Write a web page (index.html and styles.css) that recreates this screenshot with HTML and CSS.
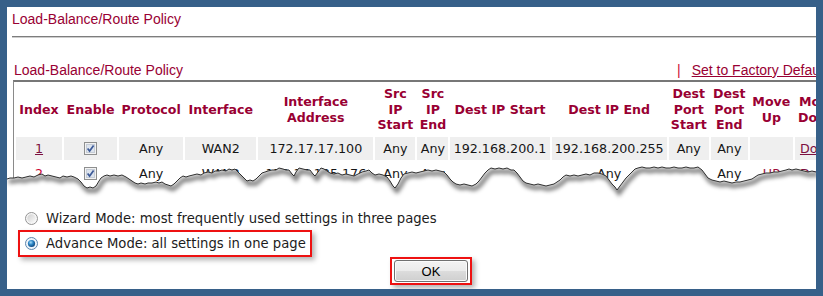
FILE: index.html
```html
<!DOCTYPE html>
<html>
<head>
<meta charset="utf-8">
<title>Load-Balance/Route Policy</title>
<link rel="stylesheet" href="styles.css">
</head>
<body>
<div class="panel">
  <div class="title">Load-Balance/Route Policy</div>
  <div class="rule"></div>
  <div class="sub">
    <span>Load-Balance/Route Policy</span>
    <span class="right"><span class="bar">|</span><a class="link" href="#">Set to Factory Default</a></span>
  </div>
  <div class="tablewrap">
    <table class="grid">
      <colgroup>
        <col><col><col><col><col><col><col><col><col><col><col><col><col>
      </colgroup>
      <thead>
        <tr>
          <th>Index</th><th>Enable</th><th>Protocol</th><th>Interface</th><th>Interface Address</th>
          <th>Src IP Start</th><th>Src IP End</th><th>Dest IP Start</th><th>Dest IP End</th>
          <th>Dest Port Start</th><th>Dest Port End</th><th>Move Up</th><th>Move Down</th>
        </tr>
      </thead>
      <tbody>
        <tr class="shade">
          <td><a class="idx" href="#">1</a></td>
          <td><svg class="cb" width="13" height="13" viewBox="0 0 13 13"><rect x="0.5" y="0.5" width="12" height="12" fill="#f2f2f2" stroke="#8e8f8f"/><rect x="2.5" y="2.5" width="8" height="8" fill="#dde4ee" stroke="#c5ccd6"/><path d="M3.6 6.4 L5.6 9 L9.6 3.4" fill="none" stroke="#3d5a98" stroke-width="1.7"/></svg></td>
          <td>Any</td><td>WAN2</td><td>172.17.17.100</td><td>Any</td><td>Any</td>
          <td>192.168.200.1</td><td>192.168.200.255</td><td>Any</td><td>Any</td><td></td>
          <td><a class="idx" href="#">Down</a></td>
        </tr>
        <tr>
          <td><a class="idx two" href="#">2</a></td>
          <td><svg class="cb" width="13" height="13" viewBox="0 0 13 13"><rect x="0.5" y="0.5" width="12" height="12" fill="#f2f2f2" stroke="#8e8f8f"/><rect x="2.5" y="2.5" width="8" height="8" fill="#dde4ee" stroke="#c5ccd6"/><path d="M3.6 6.4 L5.6 9 L9.6 3.4" fill="none" stroke="#3d5a98" stroke-width="1.7"/></svg></td>
          <td>Any</td><td>WAN2</td><td>172.16.185.176</td><td>Any</td><td>Any</td>
          <td>Any</td><td>Any</td><td>Any</td><td>Any</td>
          <td><a class="up" href="#">UP</a></td>
          <td><a class="idx" href="#">Down</a></td>
        </tr>
      </tbody>
    </table>
    <svg class="tear" width="809" height="125" viewBox="7 80 809 125">
      <defs>
        <clipPath id="below">
          <path d="M7 179 L10 178 L14 178 L18 177 L22 178 L26 177 L30 176 L34 177 L38 175 L42 174 L45 176 L48 175 L52 176 L56 177 L60 178 L63 176 L67 177 L71 176 L74 177 L78 179 L81 182 L84 186 L87 188 L90 187 L93 188 L96 186 L99 181 L101 178 L104 176 L107 175 L110 176 L114 175 L118 176 L122 175 L126 177 L129 179 L132 181 L135 183 L138 184 L141 183 L145 184 L148 183 L152 183 L156 182 L159 183 L162 182 L165 184 L168 185 L171 186 L174 184 L177 181 L180 178 L183 176 L186 177 L189 176 L193 175 L197 174 L201 175 L204 173 L208 172 L212 173 L215 171 L219 171 L222 170 L226 171 L229 169 L232 170 L235 169 L238 172 L241 175 L244 178 L247 181 L250 180 L253 181 L256 179 L259 176 L262 173 L265 172 L268 171 L272 170 L276 170 L279 168 L283 169 L286 170 L289 170 L292 174 L294 176 L296 172 L299 168 L303 169 L307 170 L310 170 L313 174 L315 176 L318 172 L321 168 L324 169 L327 171 L330 173 L334 174 L338 173 L342 175 L346 174 L350 175 L354 176 L358 174 L362 172 L366 171 L369 170 L372 173 L375 175 L379 174 L383 175 L387 177 L390 181 L393 186 L395 188 L398 184 L401 178 L404 174 L408 173 L412 172 L416 173 L420 172 L424 171 L428 170 L432 171 L436 170 L440 171 L444 172 L447 175 L450 179 L453 182 L456 184 L460 185 L464 184 L468 185 L472 186 L476 184 L479 181 L482 177 L485 173 L488 170 L491 168 L495 169 L499 168 L503 169 L507 168 L511 170 L514 170 L517 173 L520 177 L523 181 L526 183 L530 184 L534 185 L538 184 L542 185 L546 186 L550 185 L554 184 L557 182 L560 180 L563 177 L566 175 L570 176 L574 175 L578 176 L582 175 L586 174 L590 175 L594 173 L598 173 L602 174 L606 176 L609 180 L612 184 L615 187 L617 190 L620 186 L623 182 L626 178 L629 175 L632 172 L635 169 L638 168 L642 167 L646 168 L650 168 L654 167 L658 168 L662 167 L666 168 L670 168 L674 167 L678 168 L682 168 L686 167 L690 168 L694 168 L698 167 L702 170 L705 174 L708 178 L712 180 L716 181 L720 182 L724 181 L728 182 L732 183 L736 182 L740 182 L744 181 L748 180 L752 179 L755 177 L758 175 L762 174 L766 173 L770 173 L774 172 L778 172 L782 171 L786 170 L789 169 L792 170 L796 169 L800 170 L804 171 L808 172 L812 171 L816 172 L816 205 L7 205 Z"/>
        </clipPath>
        <filter id="soft" x="-5%" y="-50%" width="110%" height="200%">
          <feGaussianBlur stdDeviation="2.2"/>
        </filter>
      </defs>
      <path class="paper" d="M7 179 L10 178 L14 178 L18 177 L22 178 L26 177 L30 176 L34 177 L38 175 L42 174 L45 176 L48 175 L52 176 L56 177 L60 178 L63 176 L67 177 L71 176 L74 177 L78 179 L81 182 L84 186 L87 188 L90 187 L93 188 L96 186 L99 181 L101 178 L104 176 L107 175 L110 176 L114 175 L118 176 L122 175 L126 177 L129 179 L132 181 L135 183 L138 184 L141 183 L145 184 L148 183 L152 183 L156 182 L159 183 L162 182 L165 184 L168 185 L171 186 L174 184 L177 181 L180 178 L183 176 L186 177 L189 176 L193 175 L197 174 L201 175 L204 173 L208 172 L212 173 L215 171 L219 171 L222 170 L226 171 L229 169 L232 170 L235 169 L238 172 L241 175 L244 178 L247 181 L250 180 L253 181 L256 179 L259 176 L262 173 L265 172 L268 171 L272 170 L276 170 L279 168 L283 169 L286 170 L289 170 L292 174 L294 176 L296 172 L299 168 L303 169 L307 170 L310 170 L313 174 L315 176 L318 172 L321 168 L324 169 L327 171 L330 173 L334 174 L338 173 L342 175 L346 174 L350 175 L354 176 L358 174 L362 172 L366 171 L369 170 L372 173 L375 175 L379 174 L383 175 L387 177 L390 181 L393 186 L395 188 L398 184 L401 178 L404 174 L408 173 L412 172 L416 173 L420 172 L424 171 L428 170 L432 171 L436 170 L440 171 L444 172 L447 175 L450 179 L453 182 L456 184 L460 185 L464 184 L468 185 L472 186 L476 184 L479 181 L482 177 L485 173 L488 170 L491 168 L495 169 L499 168 L503 169 L507 168 L511 170 L514 170 L517 173 L520 177 L523 181 L526 183 L530 184 L534 185 L538 184 L542 185 L546 186 L550 185 L554 184 L557 182 L560 180 L563 177 L566 175 L570 176 L574 175 L578 176 L582 175 L586 174 L590 175 L594 173 L598 173 L602 174 L606 176 L609 180 L612 184 L615 187 L617 190 L620 186 L623 182 L626 178 L629 175 L632 172 L635 169 L638 168 L642 167 L646 168 L650 168 L654 167 L658 168 L662 167 L666 168 L670 168 L674 167 L678 168 L682 168 L686 167 L690 168 L694 168 L698 167 L702 170 L705 174 L708 178 L712 180 L716 181 L720 182 L724 181 L728 182 L732 183 L736 182 L740 182 L744 181 L748 180 L752 179 L755 177 L758 175 L762 174 L766 173 L770 173 L774 172 L778 172 L782 171 L786 170 L789 169 L792 170 L796 169 L800 170 L804 171 L808 172 L812 171 L816 172 L816 205 L7 205 Z"/>
      <g clip-path="url(#below)">
        <path class="shadow" filter="url(#soft)" transform="translate(2 3)" d="M7 179 L10 178 L14 178 L18 177 L22 178 L26 177 L30 176 L34 177 L38 175 L42 174 L45 176 L48 175 L52 176 L56 177 L60 178 L63 176 L67 177 L71 176 L74 177 L78 179 L81 182 L84 186 L87 188 L90 187 L93 188 L96 186 L99 181 L101 178 L104 176 L107 175 L110 176 L114 175 L118 176 L122 175 L126 177 L129 179 L132 181 L135 183 L138 184 L141 183 L145 184 L148 183 L152 183 L156 182 L159 183 L162 182 L165 184 L168 185 L171 186 L174 184 L177 181 L180 178 L183 176 L186 177 L189 176 L193 175 L197 174 L201 175 L204 173 L208 172 L212 173 L215 171 L219 171 L222 170 L226 171 L229 169 L232 170 L235 169 L238 172 L241 175 L244 178 L247 181 L250 180 L253 181 L256 179 L259 176 L262 173 L265 172 L268 171 L272 170 L276 170 L279 168 L283 169 L286 170 L289 170 L292 174 L294 176 L296 172 L299 168 L303 169 L307 170 L310 170 L313 174 L315 176 L318 172 L321 168 L324 169 L327 171 L330 173 L334 174 L338 173 L342 175 L346 174 L350 175 L354 176 L358 174 L362 172 L366 171 L369 170 L372 173 L375 175 L379 174 L383 175 L387 177 L390 181 L393 186 L395 188 L398 184 L401 178 L404 174 L408 173 L412 172 L416 173 L420 172 L424 171 L428 170 L432 171 L436 170 L440 171 L444 172 L447 175 L450 179 L453 182 L456 184 L460 185 L464 184 L468 185 L472 186 L476 184 L479 181 L482 177 L485 173 L488 170 L491 168 L495 169 L499 168 L503 169 L507 168 L511 170 L514 170 L517 173 L520 177 L523 181 L526 183 L530 184 L534 185 L538 184 L542 185 L546 186 L550 185 L554 184 L557 182 L560 180 L563 177 L566 175 L570 176 L574 175 L578 176 L582 175 L586 174 L590 175 L594 173 L598 173 L602 174 L606 176 L609 180 L612 184 L615 187 L617 190 L620 186 L623 182 L626 178 L629 175 L632 172 L635 169 L638 168 L642 167 L646 168 L650 168 L654 167 L658 168 L662 167 L666 168 L670 168 L674 167 L678 168 L682 168 L686 167 L690 168 L694 168 L698 167 L702 170 L705 174 L708 178 L712 180 L716 181 L720 182 L724 181 L728 182 L732 183 L736 182 L740 182 L744 181 L748 180 L752 179 L755 177 L758 175 L762 174 L766 173 L770 173 L774 172 L778 172 L782 171 L786 170 L789 169 L792 170 L796 169 L800 170 L804 171 L808 172 L812 171 L816 172"/>
      </g>
      <path class="edge" d="M7 179 L10 178 L14 178 L18 177 L22 178 L26 177 L30 176 L34 177 L38 175 L42 174 L45 176 L48 175 L52 176 L56 177 L60 178 L63 176 L67 177 L71 176 L74 177 L78 179 L81 182 L84 186 L87 188 L90 187 L93 188 L96 186 L99 181 L101 178 L104 176 L107 175 L110 176 L114 175 L118 176 L122 175 L126 177 L129 179 L132 181 L135 183 L138 184 L141 183 L145 184 L148 183 L152 183 L156 182 L159 183 L162 182 L165 184 L168 185 L171 186 L174 184 L177 181 L180 178 L183 176 L186 177 L189 176 L193 175 L197 174 L201 175 L204 173 L208 172 L212 173 L215 171 L219 171 L222 170 L226 171 L229 169 L232 170 L235 169 L238 172 L241 175 L244 178 L247 181 L250 180 L253 181 L256 179 L259 176 L262 173 L265 172 L268 171 L272 170 L276 170 L279 168 L283 169 L286 170 L289 170 L292 174 L294 176 L296 172 L299 168 L303 169 L307 170 L310 170 L313 174 L315 176 L318 172 L321 168 L324 169 L327 171 L330 173 L334 174 L338 173 L342 175 L346 174 L350 175 L354 176 L358 174 L362 172 L366 171 L369 170 L372 173 L375 175 L379 174 L383 175 L387 177 L390 181 L393 186 L395 188 L398 184 L401 178 L404 174 L408 173 L412 172 L416 173 L420 172 L424 171 L428 170 L432 171 L436 170 L440 171 L444 172 L447 175 L450 179 L453 182 L456 184 L460 185 L464 184 L468 185 L472 186 L476 184 L479 181 L482 177 L485 173 L488 170 L491 168 L495 169 L499 168 L503 169 L507 168 L511 170 L514 170 L517 173 L520 177 L523 181 L526 183 L530 184 L534 185 L538 184 L542 185 L546 186 L550 185 L554 184 L557 182 L560 180 L563 177 L566 175 L570 176 L574 175 L578 176 L582 175 L586 174 L590 175 L594 173 L598 173 L602 174 L606 176 L609 180 L612 184 L615 187 L617 190 L620 186 L623 182 L626 178 L629 175 L632 172 L635 169 L638 168 L642 167 L646 168 L650 168 L654 167 L658 168 L662 167 L666 168 L670 168 L674 167 L678 168 L682 168 L686 167 L690 168 L694 168 L698 167 L702 170 L705 174 L708 178 L712 180 L716 181 L720 182 L724 181 L728 182 L732 183 L736 182 L740 182 L744 181 L748 180 L752 179 L755 177 L758 175 L762 174 L766 173 L770 173 L774 172 L778 172 L782 171 L786 170 L789 169 L792 170 L796 169 L800 170 L804 171 L808 172 L812 171 L816 172"/>
    </svg>
  </div>
  <div class="modes">
    <label class="mode">
      <svg class="radio" width="13" height="13" viewBox="0 0 13 13"><defs><linearGradient id="ru" x1="0" y1="0" x2="1" y2="1"><stop offset="0" stop-color="#cfcfcf"/><stop offset="1" stop-color="#fbfbfb"/></linearGradient></defs><circle cx="6.5" cy="6.5" r="6" fill="#f6f6f6" stroke="#939393"/><circle cx="6.5" cy="6.5" r="4.2" fill="url(#ru)"/></svg>
      <span>Wizard Mode: most frequently used settings in three pages</span>
    </label>
    <label class="mode picked">
      <svg class="radio" width="13" height="13" viewBox="0 0 13 13"><defs><radialGradient id="rc" cx="0.4" cy="0.35" r="0.7"><stop offset="0" stop-color="#a8dcf8"/><stop offset="0.45" stop-color="#2d86c6"/><stop offset="1" stop-color="#0b3f74"/></radialGradient></defs><circle cx="6.5" cy="6.5" r="6" fill="#eef4fa" stroke="#5e86ad"/><circle cx="6.5" cy="6.5" r="3.6" fill="url(#rc)"/></svg>
      <span>Advance Mode: all settings in one page</span>
    </label>
  </div>
  <div class="actions">
    <span class="okbox"><button class="ok" type="button">OK</button></span>
  </div>
</div>
</body>
</html>
```

FILE: styles.css
```css
html, body {
  margin: 0;
  padding: 0;
}
body {
  width: 823px;
  height: 296px;
  box-sizing: border-box;
  padding: 7px;
  background: #376089;
  font-family: "DejaVu Sans", Verdana, sans-serif;
  overflow: hidden;
}
.panel {
  width: 809px;
  height: 282px;
  background: #ffffff;
  overflow: hidden;
  position: relative;
}
.title {
  margin: 4px 0 0 5px;
  font-family: "Liberation Sans", Arial, sans-serif;
  font-size: 14px;
  line-height: 16px;
  color: #990033;
  white-space: nowrap;
}
.rule {
  margin: 9px 0 0 5px;
  border-top: 1px solid #7d7d7d;
  border-bottom: 1px solid #cdcdcd;
}
.sub {
  margin: 24px 0 0 7px;
  display: grid;
  grid-template-columns: 663px max-content;
  font-family: "Liberation Sans", Arial, sans-serif;
  font-size: 14px;
  line-height: 16px;
  color: #990033;
  white-space: nowrap;
}
.bar {
  color: #cc1133;
  margin-right: 11px;
}
.link {
  color: #990033;
  text-decoration: underline;
}
.tablewrap {
  margin-top: 2px;
  height: 125px;
  position: relative;
  overflow: hidden;
}
.grid {
  margin-left: 6px;
  width: 830px;
  table-layout: fixed;
  border-collapse: separate;
  border-spacing: 2px;
  border-top: 2px solid #777777;
  border-left: 1px solid #8a8a8a;
  font-size: 12.7px;
  color: #161616;
}
.grid col:nth-child(1) { width: 46px; }
.grid col:nth-child(2) { width: 53px; }
.grid col:nth-child(3) { width: 64px; }
.grid col:nth-child(4) { width: 71px; }
.grid col:nth-child(5) { width: 115px; }
.grid col:nth-child(6) { width: 40px; }
.grid col:nth-child(7) { width: 31px; }
.grid col:nth-child(8) { width: 99px; }
.grid col:nth-child(9) { width: 115px; }
.grid col:nth-child(10) { width: 40px; }
.grid col:nth-child(11) { width: 37px; }
.grid col:nth-child(12) { width: 43px; }
.grid col:nth-child(13) { width: 46px; }
.grid th {
  height: 51px;
  padding: 0;
  font-weight: bold;
  font-size: 12.6px;
  line-height: 15.5px;
  color: #990033;
  text-align: center;
  vertical-align: middle;
  overflow: hidden;
}
.grid td {
  height: 23px;
  padding: 0;
  text-align: center;
  vertical-align: middle;
  white-space: nowrap;
  overflow: hidden;
}
.grid tr.shade td {
  background: #efefef;
}
.cb {
  display: block;
  margin: 0 auto;
}
.idx {
  color: #7c1040;
  text-decoration: underline;
}
.idx.two {
  color: #cc0033;
}
.up {
  color: #a0103c;
  text-decoration: none;
}
.tear {
  position: absolute;
  left: 0;
  top: 0;
  pointer-events: none;
}
.tear .paper {
  fill: #ffffff;
}
.tear .shadow {
  fill: none;
  stroke: #000000;
  stroke-opacity: 0.55;
  stroke-width: 4;
}
.tear .edge {
  fill: none;
  stroke: #2e2e2e;
  stroke-width: 1;
}
.modes {
  padding-left: 11px;
  font-size: 13.2px;
  color: #1c1c1c;
}
.mode {
  display: flex;
  align-items: center;
  gap: 8px;
  width: fit-content;
  height: 23px;
  padding: 0 4px 0 5px;
  border: 2px solid transparent;
  white-space: nowrap;
}
.mode.picked {
  margin-top: -2px;
  border-color: #ee1111;
  box-shadow: 3px 3px 5px rgba(0, 0, 0, 0.3);
}
.radio {
  display: block;
  flex: none;
}
.actions {
  width: 832px;
  margin-left: 6px;
  padding-left: 4px;
  box-sizing: border-box;
  display: flex;
  justify-content: center;
}
.okbox {
  display: block;
  padding: 1px 2px;
  border: 2px solid #ee1111;
  box-shadow: 3px 3px 5px rgba(0, 0, 0, 0.3);
}
.ok {
  display: block;
  width: 74px;
  height: 22px;
  padding: 0;
  border: 1px solid #707070;
  border-radius: 3px;
  background: linear-gradient(#f3f3f3 0%, #ebebeb 48%, #dcdcdc 52%, #cfcfcf 100%);
  box-shadow: inset 0 0 0 1px #fbfbfb;
  font-family: "Liberation Sans", Arial, sans-serif;
  font-size: 13px;
  color: #000000;
}
```
